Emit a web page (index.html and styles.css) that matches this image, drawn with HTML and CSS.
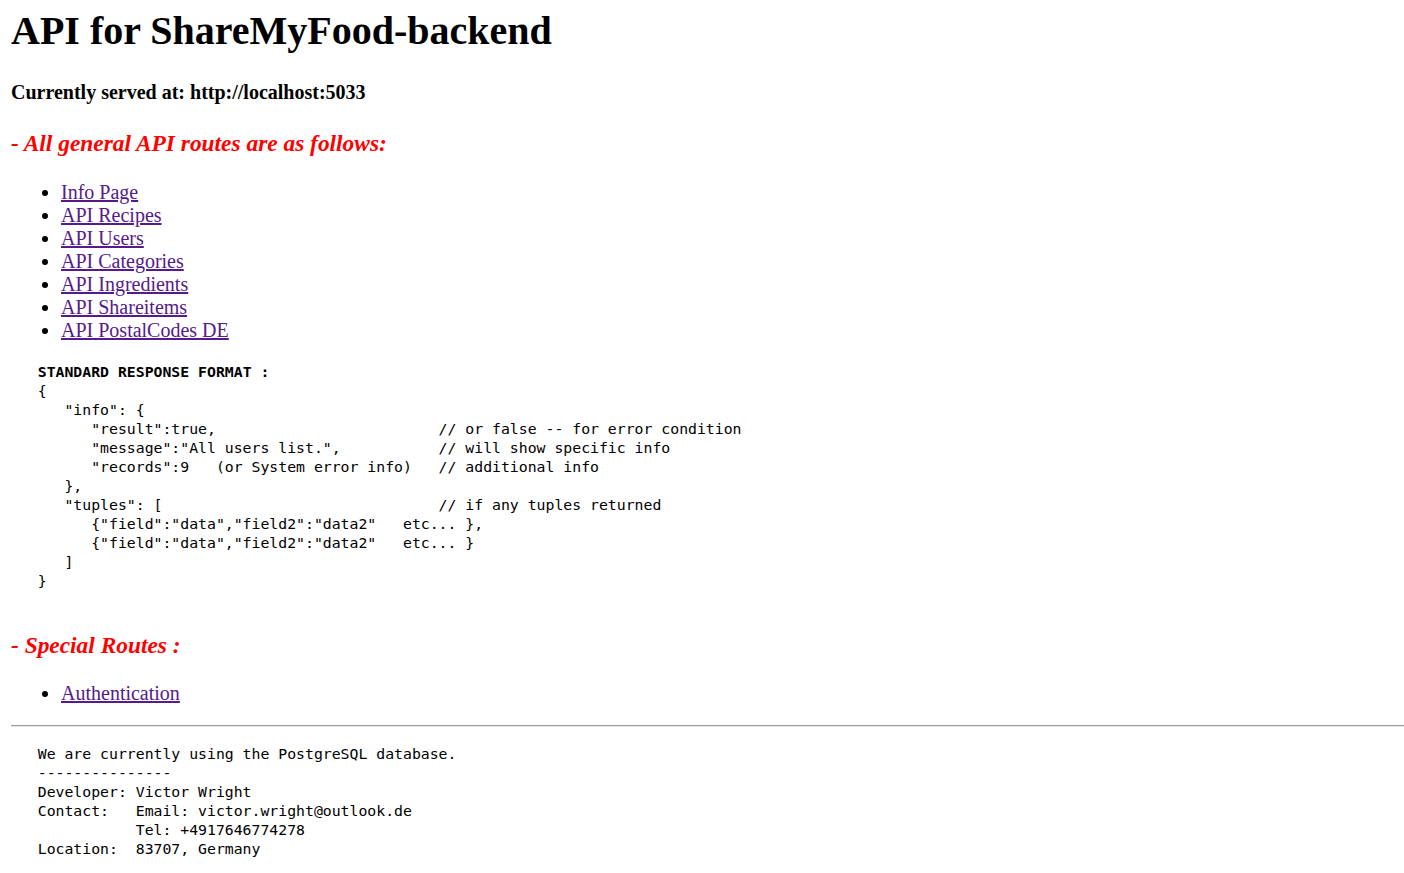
FILE: index.html
```
<!DOCTYPE html>
<html lang="en">
<head>
<meta charset="utf-8">
<title>API for ShareMyFood-backend</title>
<link rel="stylesheet" href="styles.css">
</head>
<body>
<h1 class="title">API for ShareMyFood-backend</h1>
<h4 class="served">Currently served at: http://localhost:5033</h4>
<h3 class="section">- All general API routes are as follows:</h3>
<ul class="routes">
<li><a class="route-link" href="/info">Info Page</a></li>
<li><a class="route-link" href="/api/recipes">API Recipes</a></li>
<li><a class="route-link" href="/api/users">API Users</a></li>
<li><a class="route-link" href="/api/categories">API Categories</a></li>
<li><a class="route-link" href="/api/ingredients">API Ingredients</a></li>
<li><a class="route-link" href="/api/shareitems">API Shareitems</a></li>
<li><a class="route-link" href="/api/postalcodes">API PostalCodes DE</a></li>
</ul>
<pre class="code">
   <b>STANDARD RESPONSE FORMAT :</b>
   {
      "info": {
         "result":true,                         // or false -- for error condition
         "message":"All users list.",           // will show specific info
         "records":9   (or System error info)   // additional info
      },
      "tuples": [                               // if any tuples returned
         {"field":"data","field2":"data2"   etc... },
         {"field":"data","field2":"data2"   etc... }
      ]
   }

</pre>
<h3 class="section section-tight">- Special Routes :</h3>
<ul class="routes">
<li><a class="route-link" href="/auth">Authentication</a></li>
</ul>
<hr class="divider">
<pre class="code code-footer">
   We are currently using the PostgreSQL database.
   ---------------
   Developer: Victor Wright
   Contact:   Email: victor.wright@outlook.de
              Tel: +4917646774278
   Location:  83707, Germany
</pre>
</body>
</html>
```
FILE: styles.css
```
html {
  background: #ffffff;
}

body {
  margin: 0 0 10px 11px;
  font-family: "Liberation Serif", "Times New Roman", serif;
  font-size: 20px;
  color: #000000;
}

.title {
  font-size: 40px;
  font-weight: bold;
  margin: 7px 0 26.8px;
}

.served {
  font-size: 20px;
  font-weight: bold;
  margin: 26.6px 0;
}

.section {
  font-size: 23.4px;
  font-weight: bold;
  font-style: italic;
  color: #ff0000;
  margin: 23.4px 0;
}

.section-tight {
  margin-bottom: 22.4px;
}

.routes {
  margin: 20px 0;
  padding-left: 50px;
}

.route-link {
  color: #551a8b;
}

.code {
  font-family: "DejaVu Sans Mono", "Liberation Mono", monospace;
  font-size: 14.8px;
  line-height: 19px;
  margin: 16.25px 0;
}

.code-footer {
  margin-top: 17.25px;
}

.divider {
  height: 0;
  margin: 10px 0;
  border: 0;
  border-top: 1px solid #9a9a9a;
  border-bottom: 1px solid #e6e6e6;
}
```
